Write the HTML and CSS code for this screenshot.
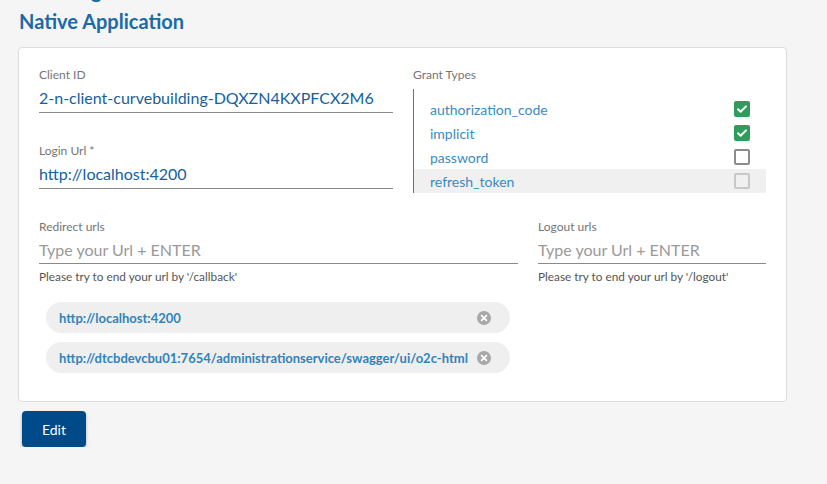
FILE: index.html
```html
<!DOCTYPE html>
<html>
<head>
<meta charset="utf-8">
<link rel="stylesheet" href="styles.css">
</head>
<body>
<div class="page">
  <h2 class="prev-title">Checking</h2>
  <h2 class="title">Native Application</h2>
  <div class="card">
    <div class="top-row">
      <div class="col-left">
        <div class="field">
          <div class="label">Client ID</div>
          <div class="input value">2-n-client-curvebuilding-DQXZN4KXPFCX2M6</div>
        </div>
        <div class="field field-login">
          <div class="label">Login Url *</div>
          <div class="input value">http://localhost:4200</div>
        </div>
      </div>
      <div class="col-right">
        <div class="label">Grant Types</div>
        <div class="grant-list">
          <div class="grant-row"><span>authorization_code</span><span class="cb checked"><svg viewBox="0 0 16 16" width="16" height="16"><path d="M4 8.2l2.6 2.5L12 5.4" fill="none" stroke="#fff" stroke-width="2" stroke-linecap="round" stroke-linejoin="round"/></svg></span></div>
          <div class="grant-row"><span>implicit</span><span class="cb checked"><svg viewBox="0 0 16 16" width="16" height="16"><path d="M4 8.2l2.6 2.5L12 5.4" fill="none" stroke="#fff" stroke-width="2" stroke-linecap="round" stroke-linejoin="round"/></svg></span></div>
          <div class="grant-row"><span>password</span><span class="cb"></span></div>
          <div class="grant-row disabled"><span>refresh_token</span><span class="cb cb-disabled"></span></div>
        </div>
      </div>
    </div>
    <div class="url-row">
      <div class="url-col redirect">
        <div class="label">Redirect urls</div>
        <div class="input placeholder">Type your Url + ENTER</div>
        <div class="hint">Please try to end your url by '/callback'</div>
      </div>
      <div class="url-col logout">
        <div class="label">Logout urls</div>
        <div class="input placeholder">Type your Url + ENTER</div>
        <div class="hint">Please try to end your url by '/logout'</div>
      </div>
    </div>
    <div class="chips">
      <div class="chip"><span>http://localhost:4200</span><span class="chip-x"><svg viewBox="0 0 14 14" width="14" height="14"><circle cx="7" cy="7" r="7" fill="#a9a9a9"/><path d="M4.6 4.6l4.8 4.8M9.4 4.6l-4.8 4.8" stroke="#fff" stroke-width="1.8" stroke-linecap="round"/></svg></span></div>
      <div class="chip"><span>http://dtcbdevcbu01:7654/administrationservice/swagger/ui/o2c-html</span><span class="chip-x"><svg viewBox="0 0 14 14" width="14" height="14"><circle cx="7" cy="7" r="7" fill="#a9a9a9"/><path d="M4.6 4.6l4.8 4.8M9.4 4.6l-4.8 4.8" stroke="#fff" stroke-width="1.8" stroke-linecap="round"/></svg></span></div>
    </div>
  </div>
  <button class="btn">Edit</button>
</div>
</body>
</html>
```
FILE: styles.css
```css
html, body {
  margin: 0;
  padding: 0;
  background: #f5f5f5;
  font-family: Lato, "Open Sans", sans-serif;
  overflow: hidden;
}
.page {
  padding: 0 0 0 18px;
}
.prev-title {
  margin: -22px 0 0 1px;
  font-size: 20px;
  line-height: 24px;
  font-weight: 700;
  color: #1b6aa6;
  height: 24px;
}
.title {
  margin: 7px 0 0 1px;
  font-size: 20px;
  line-height: 24px;
  font-weight: 700;
  color: #1b6aa6;
}
.card {
  margin-top: 14px;
  background: #fff;
  border: 1px solid #dcdcdc;
  border-radius: 4px;
  padding: 19px 20px 28px 20px;
  box-sizing: border-box;
  width: 769px;
}
.top-row {
  display: flex;
  gap: 20px;
}
.col-left {
  width: 354px;
}
.col-right {
  width: 353px;
}
.label {
  font-size: 12px;
  line-height: 16px;
  color: #757575;
}
.input {
  border-bottom: 1px solid #8a8a8a;
  font-size: 16px;
  height: 28px;
  line-height: 28px;
  padding-top: 1px;
  box-sizing: content-box;
}
.value {
  color: #155f9c;
}
.field-login {
  margin-top: 30px;
}
.grant-list {
  margin-top: 6px;
  border-left: 1px solid #6f6f6f;
  padding-top: 8px;
}
.grant-row {
  display: flex;
  justify-content: space-between;
  align-items: center;
  height: 24px;
  padding: 0 16px;
  font-size: 14px;
  color: #3a8bc2;
}
.grant-row.disabled {
  background: #f0f0f0;
}
.cb {
  width: 16px;
  height: 16px;
  border-radius: 2px;
  border: 2px solid #8c8c8c;
  box-sizing: border-box;
  display: flex;
}
.cb.checked {
  background: #2f9c5c;
  border: none;
}
.cb-disabled {
  border-color: #c8c8c8;
}
.url-row {
  display: flex;
  gap: 20px;
  margin-top: 26px;
}
.redirect {
  width: 479px;
}
.logout {
  width: 228px;
}
.placeholder {
  color: #9a9a9a;
  line-height: 26px;
  height: 26px;
  padding-top: 2px;
}
.hint {
  font-size: 11.8px;
  line-height: 14px;
  margin-top: 6px;
  color: #555;
}
.chips {
  margin: 18px 0 0 7px;
  display: flex;
  flex-direction: column;
  gap: 9px;
}
.chip {
  width: 464px;
  height: 31px;
  border-radius: 16px;
  background: #efefef;
  display: flex;
  align-items: center;
  justify-content: space-between;
  padding: 0 19px 0 13px;
  box-sizing: border-box;
  font-size: 13px;
  font-weight: 700;
  color: #2f84bd;
}
.chip-x {
  display: flex;
}
.btn {
  margin: 9px 0 0 4px;
  width: 64px;
  height: 36px;
  border: none;
  border-radius: 4px;
  background: #004a8a;
  color: #fff;
  font-family: Lato, sans-serif;
  font-size: 14px;
  box-shadow: 0 2px 3px rgba(0,0,0,0.3);
}
```
